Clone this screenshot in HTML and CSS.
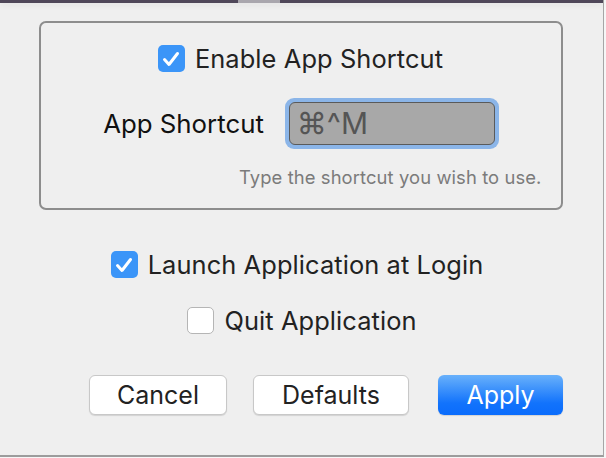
FILE: index.html
```html
<!DOCTYPE html>
<html>
<head>
<meta charset="utf-8">
<title>Preferences</title>
<link rel="stylesheet" href="styles.css">
</head>
<body>
	<div class="window">
		<div class="titlebar">
			<span class="bar-left"></span>
			<span class="bar-gap"></span>
			<span class="bar-right"></span>
		</div>

		<div class="group">
			<label class="check-row">
				<span class="check on">
					<svg viewBox="0 0 26 26" width="26" height="26"><path d="M6.5 13.5 L11 18.5 L19.5 7.5" fill="none" stroke="#fff" stroke-width="3" stroke-linecap="round" stroke-linejoin="round"/></svg>
				</span>
				<span class="check-text">Enable App Shortcut</span>
			</label>

			<div class="shortcut-row">
				<span class="field-label">App Shortcut</span>
				<div class="focus-ring">
					<div class="field">⌘^M</div>
				</div>
			</div>

			<p class="hint">Type the shortcut you wish to use.</p>
		</div>

		<div class="options">
			<label class="check-row launch">
				<span class="check on">
					<svg viewBox="0 0 26 26" width="26" height="26"><path d="M6.5 13.5 L11 18.5 L19.5 7.5" fill="none" stroke="#fff" stroke-width="3" stroke-linecap="round" stroke-linejoin="round"/></svg>
				</span>
				<span class="check-text">Launch Application at Login</span>
			</label>
			<label class="check-row quit">
				<span class="check"></span>
				<span class="check-text">Quit Application</span>
			</label>
		</div>

		<div class="buttons">
			<button class="btn btn-cancel">Cancel</button>
			<button class="btn btn-defaults">Defaults</button>
			<button class="btn btn-apply">Apply</button>
		</div>
	</div>
</body>
</html>
```

FILE: styles.css
```css
html, body {
	margin: 0;
	padding: 0;
}
body {
	width: 606px;
	height: 458px;
	overflow: hidden;
	background: #f6f6f6;
	font-family: Inter, "Noto Sans", "Liberation Sans", sans-serif;
	color: #222;
}
.window {
	width: 603px;
	height: 455px;
	background: #efefef;
	border-right: 1px solid #a6a6a6;
	border-bottom: 2px solid #9c9c9c;
	display: flex;
	flex-direction: column;
	align-items: center;
}
.titlebar {
	align-self: stretch;
	display: flex;
	height: 3px;
	box-shadow: 0 2px 6px rgba(0, 0, 0, 0.08);
}
.bar-left {
	width: 238px;
	background: #4f4759;
}
.bar-gap {
	width: 42px;
	background: #a9a6ad;
}
.bar-right {
	flex: 1;
	background: #4f4759;
}

/* group box */
.group {
	box-sizing: border-box;
	width: 524px;
	height: 189px;
	margin: 18px 0 0 -2px;
	border: 2px solid #8d8d8d;
	border-radius: 7px;
	padding-top: 20px;
	display: flex;
	flex-direction: column;
	align-items: center;
}
.check-row {
	display: flex;
	align-items: center;
	gap: 10px;
}
.check {
	box-sizing: border-box;
	width: 27px;
	height: 27px;
	border-radius: 5px;
	background: #fff;
	border: 1px solid #b5b5b5;
	display: flex;
	align-items: center;
	justify-content: center;
}
.check.on {
	background: #3b95f8;
	border: none;
}
.check-text {
	font-size: 25.4px;
	letter-spacing: 0.1px;
}
.shortcut-row {
	display: flex;
	align-items: center;
	gap: 21px;
	margin-top: 24px;
	margin-left: 1px;
}
.field-label {
	font-size: 25.8px;
	color: #111;
}
.focus-ring {
	padding: 4px;
	border-radius: 9px;
	background: #8bb5e8;
}
.field {
	box-sizing: border-box;
	width: 206px;
	height: 43px;
	background: #a8a8a8;
	border: 1px solid #5a5a5a;
	border-radius: 6px;
	padding-left: 7px;
	font-size: 30px;
	line-height: 40px;
	color: #555;
}
.hint {
	align-self: flex-end;
	margin: 17px 19px 0 0;
	font-size: 18.4px;
	color: #7b7b7b;
	letter-spacing: 0.1px;
}

/* checkboxes below */
.options {
	display: flex;
	flex-direction: column;
	align-items: center;
	gap: 25px;
	margin-top: 39px;
	margin-left: -6px;
}
.launch {
	margin-right: 3px;
}
.quit {
	margin-left: 7px;
}

/* buttons */
.buttons {
	align-self: stretch;
	display: flex;
	padding-left: 89px;
	margin-top: 39px;
}
.btn {
	box-sizing: border-box;
	height: 40px;
	font-family: inherit;
	font-size: 25px;
	color: #222;
	background: #fff;
	border: 1px solid #c8c8c8;
	border-radius: 6px;
	box-shadow: 0 1px 1px rgba(0, 0, 0, 0.12);
	padding: 0;
}
.btn-cancel {
	width: 138px;
}
.btn-defaults {
	width: 156px;
	margin-left: 26px;
}
.btn-apply {
	width: 125px;
	margin-left: 29px;
	color: #fff;
	border: none;
	background: linear-gradient(#69b1fb, #1273fc 70%, #0a6cfc);
}
```
